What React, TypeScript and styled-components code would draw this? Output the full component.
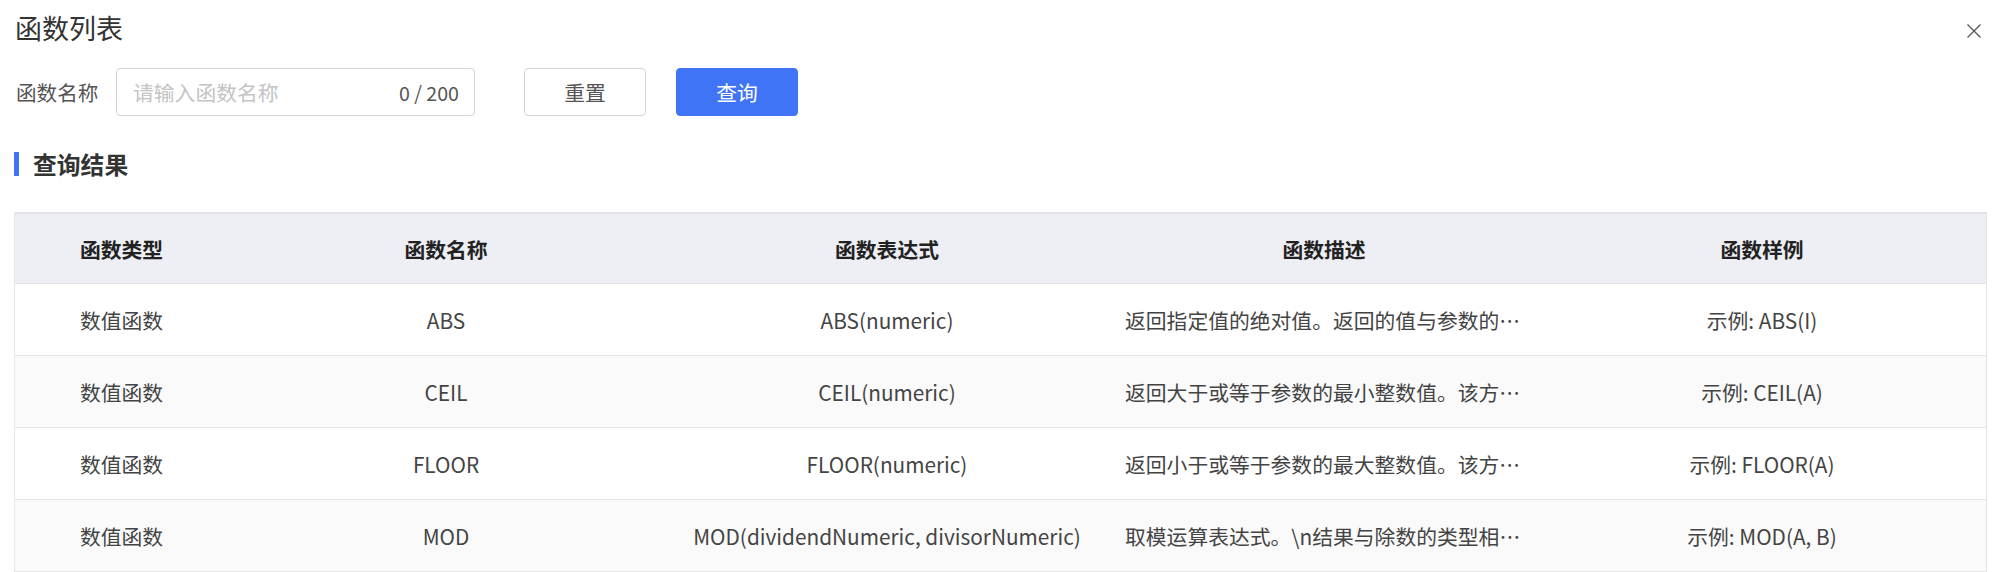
import React from 'react'
import styled, { createGlobalStyle } from 'styled-components'

const GlobalStyle = createGlobalStyle`
  html, body {
    margin: 0;
    padding: 0;
    background: #fff;
    overflow: hidden;
  }
  body {
    font-family: 'Noto Sans CJK SC', 'Noto Sans', sans-serif;
    color: #333;
  }
`

type Row = {
  kind: string
  name: string
  expr: string
  desc: string
  sample: string
}

const rows: Row[] = [
  {
    kind: '数值函数',
    name: 'ABS',
    expr: 'ABS(numeric)',
    desc: '返回指定值的绝对值。返回的值与参数的类型相同。',
    sample: '示例: ABS(I)',
  },
  {
    kind: '数值函数',
    name: 'CEIL',
    expr: 'CEIL(numeric)',
    desc: '返回大于或等于参数的最小整数值。该方法返回值类型与参数相同。',
    sample: '示例: CEIL(A)',
  },
  {
    kind: '数值函数',
    name: 'FLOOR',
    expr: 'FLOOR(numeric)',
    desc: '返回小于或等于参数的最大整数值。该方法返回值类型与参数相同。',
    sample: '示例: FLOOR(A)',
  },
  {
    kind: '数值函数',
    name: 'MOD',
    expr: 'MOD(dividendNumeric, divisorNumeric)',
    desc: '取模运算表达式。\\n结果与除数的类型相同。',
    sample: '示例: MOD(A, B)',
  },
]

const columns = [
  { title: '函数类型', width: 213 },
  { title: '函数名称', width: 436 },
  { title: '函数表达式', width: 446 },
  { title: '函数描述', width: 428 },
  { title: '函数样例', width: 448 },
]

const App = () => {
  return (
    <Page>
      <GlobalStyle />
      <Header>
        <Title>函数列表</Title>
        <Close aria-label="关闭">
          <svg width="16" height="16" viewBox="0 0 16 16">
            <path d="M1.5 1.5 L14.5 14.5 M14.5 1.5 L1.5 14.5" stroke="#555" strokeWidth="1.3" fill="none" />
          </svg>
        </Close>
      </Header>

      <Form>
        <Label>函数名称</Label>
        <InputBox>
          <Input placeholder="请输入函数名称" />
          <Count>0 / 200</Count>
        </InputBox>
        <Actions>
          <Button>重置</Button>
          <Button primary>查询</Button>
        </Actions>
      </Form>

      <Section>查询结果</Section>

      <Table>
        <colgroup>
          {columns.map((c) => (
            <col key={c.title} style={{ width: c.width }} />
          ))}
        </colgroup>
        <thead>
          <tr>
            {columns.map((c) => (
              <Th key={c.title}>{c.title}</Th>
            ))}
          </tr>
        </thead>
        <tbody>
          {rows.map((r, i) => (
            <Tr key={r.name} striped={i % 2 === 1}>
              <Td>{r.kind}</Td>
              <Td>{r.name}</Td>
              <Td>{r.expr}</Td>
              <Td left>{r.desc}</Td>
              <Td>{r.sample}</Td>
            </Tr>
          ))}
        </tbody>
      </Table>
    </Page>
  )
}

export default App

const Td = styled.td<{ left?: boolean }>`
    height: 71px;
    padding: 0 15px;
    text-align: ${(props) => (props.left ? 'left' : 'center')};
    font-size: 20.8px;
    color: #444;
    white-space: nowrap;
    overflow: hidden;
    text-overflow: ellipsis;
    border-bottom: 1px solid #e6e6e6;
`

const Tr = styled.tr<{ striped: boolean }>`
    background-color: ${(props) => (props.striped ? '#fafafa' : '#fff')};
`

const Th = styled.th`
    height: 69px;
    padding: 0 15px;
    text-align: center;
    font-size: 20.8px;
    font-weight: 700;
    color: #222;
    background-color: #eeeff4;
    border-bottom: 1px solid #e2e2e2;
`

const Table = styled.table`
    width: 1971px;
    margin-left: 14px;
    table-layout: fixed;
    border-collapse: separate;
    border-spacing: 0;
    border-top: 2px solid #e4e4e4;
    border-left: 1px solid #e6e6e6;
    border-right: 1px solid #e6e6e6;
`

const Section = styled.div`
    margin: 36px 0 36px 14px;
    padding-left: 14px;
    height: 24px;
    line-height: 24px;
    border-left: 5px solid #3e74f5;
    font-size: 23.8px;
    font-weight: 700;
    color: #333;
`

const Button = styled.button<{ primary?: boolean }>`
    width: 122px;
    height: 48px;
    border-radius: 4px;
    border: 1px solid ${(props) => (props.primary ? '#3e74f5' : '#d4d4d4')};
    background-color: ${(props) => (props.primary ? '#3e74f5' : '#fff')};
    color: ${(props) => (props.primary ? '#fff' : '#555')};
    font-family: 'Noto Sans CJK SC', sans-serif;
    font-size: 20.8px;
    padding: 0;
    cursor: pointer;
`

const Actions = styled.div`
    display: flex;
    gap: 30px;
    margin-left: 49px;
`

const Count = styled.span`
    font-size: 19.6px;
    color: #555;
    white-space: nowrap;
`

const Input = styled.input`
    flex: 1;
    min-width: 0;
    border: none;
    outline: none;
    padding: 0;
    background: transparent;
    font-family: 'Noto Sans CJK SC', sans-serif;
    font-size: 20.8px;
    color: #333;
    &::placeholder {
        color: #c4c4c4;
    }
`

const InputBox = styled.div`
    box-sizing: border-box;
    width: 359px;
    height: 48px;
    display: flex;
    align-items: center;
    padding: 0 15px 0 16px;
    border: 1px solid #d4d4d4;
    border-radius: 4px;
`

const Label = styled.div`
    width: 100px;
    font-size: 20.6px;
    color: #555;
`

const Form = styled.div`
    display: flex;
    align-items: center;
    margin-top: 22px;
    padding-left: 16px;
`

const Close = styled.div`
    width: 16px;
    height: 16px;
    margin-top: 10px;
    margin-right: 20px;
`

const Title = styled.div`
    font-size: 27px;
    line-height: 36px;
    color: #333;
`

const Header = styled.div`
    display: flex;
    justify-content: space-between;
    align-items: flex-start;
    padding: 10px 0 0 15px;
`

const Page = styled.div`
    width: 2002px;
    height: 572px;
    overflow: hidden;
`
